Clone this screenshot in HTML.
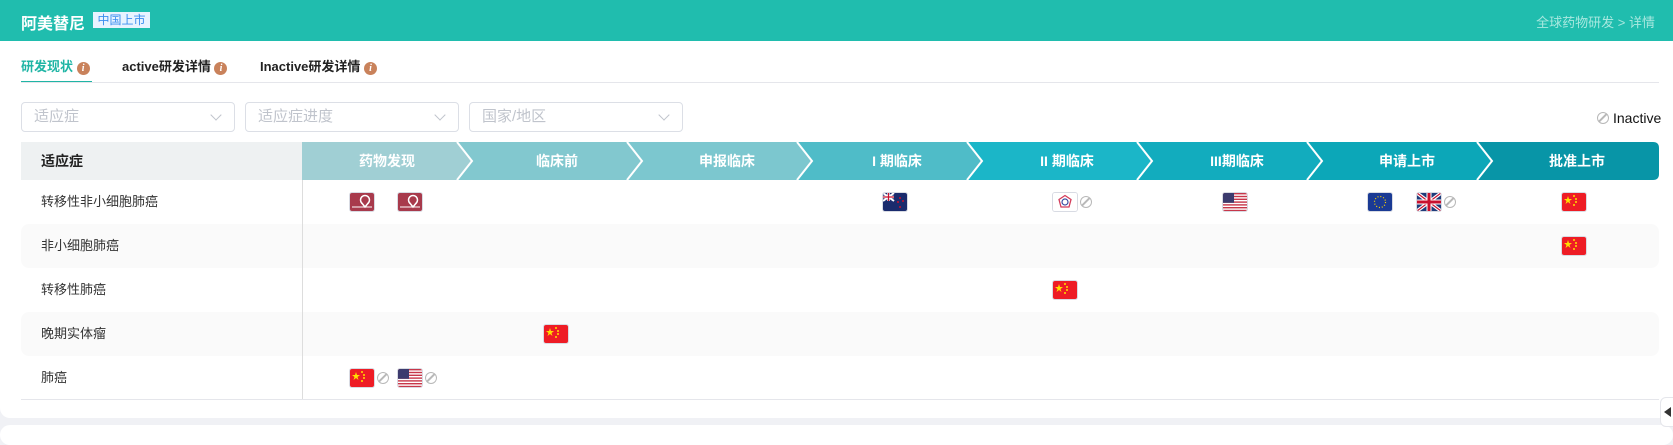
<!DOCTYPE html>
<html><head><meta charset="utf-8"><style>
*{margin:0;padding:0;box-sizing:border-box}
body{width:1673px;height:432px;overflow:hidden;background:#f0f1f5;font-family:"Liberation Sans","Noto Sans CJK SC",sans-serif;position:relative}
.abs{position:absolute}
.hdr{left:0;top:0;width:1673px;height:41px;background:#20bdae}
.card{left:0;top:41px;width:1673px;height:377px;background:#fff;border-radius:0 0 10px 10px}
.card2{left:0;top:425px;width:1673px;height:20px;background:#fff;border-radius:10px}
.info{display:inline-block;width:13px;height:13px;border-radius:50%;background:#c9825b;color:#fff;font-size:10px;font-weight:bold;text-align:center;line-height:13px;font-style:italic;font-family:"Liberation Serif",serif}
.tab{top:56px;font-size:13px;font-weight:bold;color:#222;white-space:nowrap}
.sel{left:21px;top:102px;width:214px;height:30px;border:1px solid #dcdfe6;border-radius:4px;font-size:15px;color:#c0c4cc;padding:5px 12px;line-height:18px}
.sel::after{content:"";position:absolute;right:14px;top:8px;width:7px;height:7px;border-right:1px solid #c0c4cc;border-bottom:1px solid #c0c4cc;transform:rotate(45deg)}
.row{left:21px;width:1638px;height:44px;font-size:13px;color:#333;padding-left:20px;line-height:44px}
.g{background:#fafafa;border-radius:8px}
.fl{position:absolute;width:24px;height:18px;border-radius:2px;overflow:hidden;box-shadow:0 0 0 1px #d8dbe3}
.no{position:absolute;width:12px;height:12px;border:1.5px solid #b8b8b8;border-radius:50%}
.no::after{content:"";position:absolute;left:4px;top:-1px;width:1.5px;height:11px;background:#b8b8b8;transform:rotate(45deg)}
</style></head><body>
<div class="abs hdr"></div>
<div class="abs" style="left:21px;top:10px;color:#fff;font-size:16px;font-weight:bold">阿美替尼</div>
<div class="abs" style="left:93px;top:12px;width:57px;height:16px;background:#e8f3ff;color:#3b8ef0;font-size:12px;text-align:center;line-height:16px">中国上市</div>
<div class="abs" style="right:18px;top:12px;color:#a8e8df;font-size:13px">全球药物研发 &gt; 详情</div>
<div class="abs card"></div>
<div class="abs card2"></div>

<div class="abs tab" style="left:21px;color:#20b5a5">研发现状 <span class="info">i</span></div>
<div class="abs" style="left:21px;top:81px;width:71px;height:2px;background:#20b5a5"></div>
<div class="abs tab" style="left:122px">active研发详情 <span class="info">i</span></div>
<div class="abs tab" style="left:260px">Inactive研发详情 <span class="info">i</span></div>
<div class="abs" style="left:21px;top:82px;width:1638px;height:1px;background:#e5e6eb"></div>

<div class="abs sel">适应症</div>
<div class="abs sel" style="left:245px">适应症进度</div>
<div class="abs sel" style="left:469px">国家/地区</div>
<div class="abs no" style="left:1597px;top:112px"></div>
<div class="abs" style="left:1613px;top:110px;font-size:14px;color:#111">Inactive</div>

<div class="abs" style="left:21px;top:142px;width:281px;height:38px;background:#eef1f2;font-size:14px;font-weight:bold;color:#222;padding-left:20px;line-height:38px">适应症</div>
<svg class="abs" style="left:302px;top:142px" width="1357" height="38">
<g>
<polygon points="0,0 155,0 170,19 155,38 0,38" fill="#a0cfd4"/>
<polygon points="155,0 325,0 340,19 325,38 155,38 170,19" fill="#82c8cf"/>
<polygon points="325,0 495,0 510,19 495,38 325,38 340,19" fill="#7cc7cf"/>
<polygon points="495,0 665,0 680,19 665,38 495,38 510,19" fill="#4fbcc8"/>
<polygon points="665,0 835,0 850,19 835,38 665,38 680,19" fill="#1bb6c8"/>
<polygon points="835,0 1005,0 1020,19 1005,38 835,38 850,19" fill="#12acbe"/>
<polygon points="1005,0 1175,0 1190,19 1175,38 1005,38 1020,19" fill="#0ca7b8"/>
<path d="M1175,0 H1351 Q1357,0 1357,6 V32 Q1357,38 1351,38 H1175 L1190,19 Z" fill="#0895a7"/>
<path d="M155,0 L170,19 L155,38 M325,0 L340,19 L325,38 M495,0 L510,19 L495,38 M665,0 L680,19 L665,38 M835,0 L850,19 L835,38 M1005,0 L1020,19 L1005,38 M1175,0 L1190,19 L1175,38" stroke="#fff" stroke-width="2" fill="none"/>
</g>
<g fill="#fff" font-size="14" font-weight="bold" text-anchor="middle" font-family="Liberation Sans,Noto Sans CJK SC,sans-serif">
<text x="85" y="24">药物发现</text><text x="255" y="24">临床前</text><text x="425" y="24">申报临床</text><text x="595" y="24">I 期临床</text><text x="765" y="24">II 期临床</text><text x="935" y="24">III期临床</text><text x="1105" y="24">申请上市</text><text x="1275" y="24">批准上市</text>
</g>
</svg>

<div class="abs row" style="top:180px">转移性非小细胞肺癌</div>
<div class="abs row g" style="top:224px">非小细胞肺癌</div>
<div class="abs row" style="top:268px">转移性肺癌</div>
<div class="abs row g" style="top:312px">晚期实体瘤</div>
<div class="abs row" style="top:356px">肺癌</div>
<div class="abs" style="left:302px;top:180px;width:1px;height:219px;background:#ddd"></div>
<div class="abs" style="left:21px;top:399px;width:1638px;height:1px;background:#e5e6eb"></div>

<svg width="0" height="0" style="position:absolute"><defs>
<symbol id="cn" viewBox="0 0 24 18"><rect width="24" height="18" fill="#ee1c25"/><polygon points="6,3 7,6 10,6 7.5,8 8.5,11 6,9 3.5,11 4.5,8 2,6 5,6" fill="#ffde00"/><circle cx="12" cy="3" r="1" fill="#ffde00"/><circle cx="14" cy="6" r="1" fill="#ffde00"/><circle cx="14" cy="9" r="1" fill="#ffde00"/><circle cx="12" cy="12" r="1" fill="#ffde00"/></symbol>
<symbol id="us" viewBox="0 0 24 18"><rect width="24" height="18" fill="#fff"/><g fill="#c7374a"><rect y="0" width="24" height="1.4"/><rect y="2.8" width="24" height="1.4"/><rect y="5.6" width="24" height="1.4"/><rect y="8.4" width="24" height="1.4"/><rect y="11.2" width="24" height="1.4"/><rect y="14" width="24" height="1.4"/><rect y="16.8" width="24" height="1.2"/></g><rect width="11" height="9.8" fill="#3c3b6e"/></symbol>
<symbol id="eu" viewBox="0 0 24 18"><rect width="24" height="18" fill="#1a3a94"/><circle cx="12" cy="9" r="5.5" fill="none" stroke="#ffd500" stroke-width="1.2" stroke-dasharray="1 1.9"/></symbol>
<symbol id="uk" viewBox="0 0 24 18"><rect width="24" height="18" fill="#1f3b7a"/><path d="M0,0 L24,18 M24,0 L0,18" stroke="#fff" stroke-width="3.5"/><path d="M0,0 L24,18 M24,0 L0,18" stroke="#c8102e" stroke-width="1.2"/><path d="M12,0 V18 M0,9 H24" stroke="#fff" stroke-width="5"/><path d="M12,0 V18 M0,9 H24" stroke="#c8102e" stroke-width="3"/></symbol>
<symbol id="nz" viewBox="0 0 24 18"><rect width="24" height="18" fill="#1a2b6d"/><path d="M0,0 L11,8 M11,0 L0,8" stroke="#fff" stroke-width="2"/><path d="M5.5,0 V8 M0,4 H11" stroke="#fff" stroke-width="2.5"/><path d="M5.5,0 V8 M0,4 H11" stroke="#c8102e" stroke-width="1.2"/><g fill="#c8102e"><circle cx="17" cy="5" r="1"/><circle cx="20" cy="8" r="1"/><circle cx="15" cy="9" r="1"/><circle cx="17" cy="14" r="1"/></g></symbol>
<symbol id="rd" viewBox="0 0 24 18"><rect width="24" height="18" fill="#a83a4c"/><path d="M2,14 H22" stroke="#fff" stroke-width="1"/><circle cx="15" cy="7" r="4.5" fill="none" stroke="#fff" stroke-width="1.5"/><path d="M11,9 L15,14 L19,9" fill="#a83a4c" stroke="#fff" stroke-width="1.5"/></symbol>
<symbol id="tw" viewBox="0 0 24 18"><rect width="24" height="18" fill="#fff"/><polygon points="12,2.5 18,6.5 16,14 8,14 6,6.5" fill="none" stroke="#d43c5a" stroke-width="1.3"/><circle cx="12" cy="9" r="3" fill="none" stroke="#3c4ba0" stroke-width="1.2"/></symbol>
</defs></svg>

<svg class="fl" style="left:350px;top:193px"><use href="#rd"/></svg>
<svg class="fl" style="left:398px;top:193px"><use href="#rd"/></svg>
<svg class="fl" style="left:883px;top:193px"><use href="#nz"/></svg>
<svg class="fl" style="left:1053px;top:193px"><use href="#tw"/></svg><div class="no" style="left:1080px;top:196px"></div>
<svg class="fl" style="left:1223px;top:193px"><use href="#us"/></svg>
<svg class="fl" style="left:1368px;top:193px"><use href="#eu"/></svg>
<svg class="fl" style="left:1417px;top:193px"><use href="#uk"/></svg><div class="no" style="left:1444px;top:196px"></div>
<svg class="fl" style="left:1562px;top:193px"><use href="#cn"/></svg>
<svg class="fl" style="left:1562px;top:237px"><use href="#cn"/></svg>
<svg class="fl" style="left:1053px;top:281px"><use href="#cn"/></svg>
<svg class="fl" style="left:544px;top:325px"><use href="#cn"/></svg>
<svg class="fl" style="left:350px;top:369px"><use href="#cn"/></svg><div class="no" style="left:377px;top:372px"></div>
<svg class="fl" style="left:398px;top:369px"><use href="#us"/></svg><div class="no" style="left:425px;top:372px"></div>

<div class="abs" style="left:1660px;top:397px;width:16px;height:30px;background:#fff;border:1px solid #e5e6eb;border-radius:6px 0 0 6px"></div>
<div class="abs" style="left:1664px;top:407px;width:0;height:0;border-top:5px solid transparent;border-bottom:5px solid transparent;border-right:7px solid #333"></div>
</body></html>
